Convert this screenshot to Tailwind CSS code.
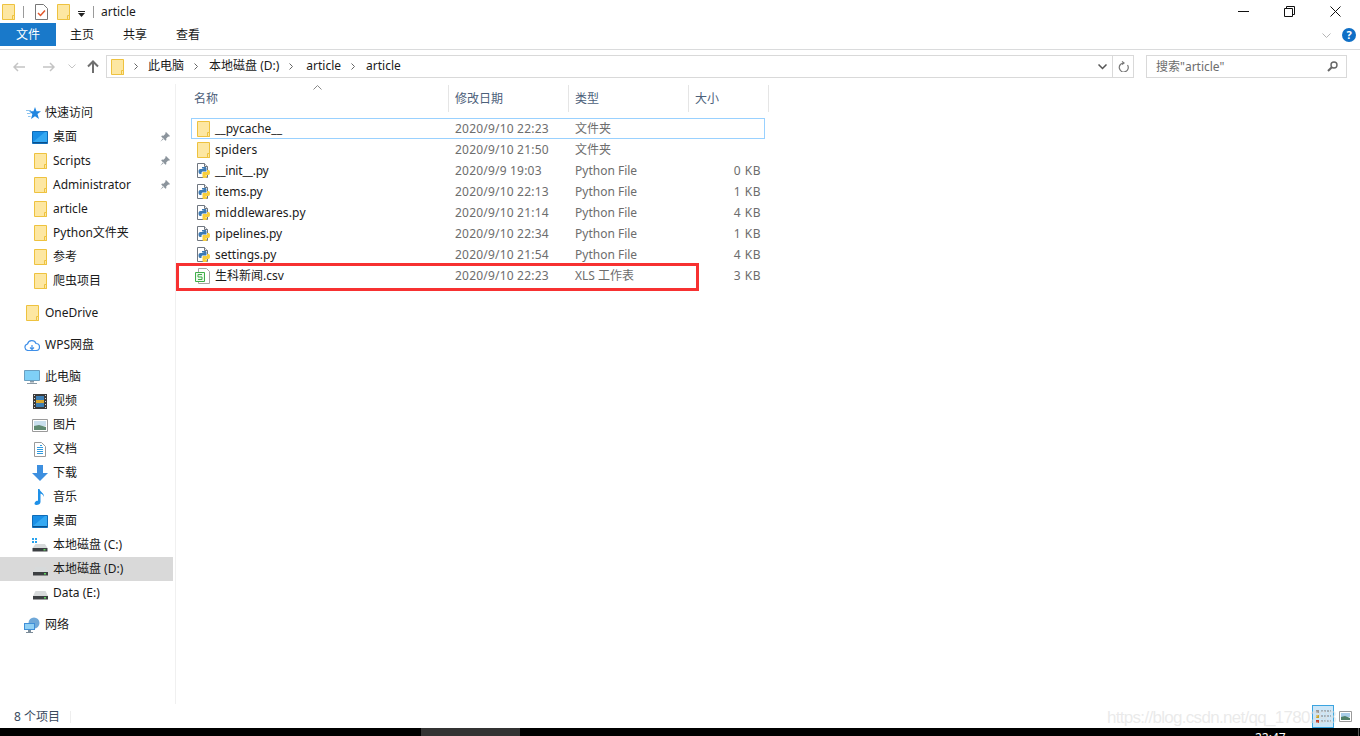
<!DOCTYPE html>
<html lang="zh-CN">
<head>
<meta charset="UTF-8">
<title>article</title>
<script src="https://cdn.jsdelivr.net/npm/@tailwindcss/browser@4"></script>
</head>
<body class="bg-white w-[1360px] h-[736px] overflow-hidden relative text-[12px] leading-[16px] text-[#1a1a1a] font-['Noto_Sans','Noto_Sans_CJK_SC',sans-serif]">

<svg class="hidden">
  <symbol id="folder" viewBox="0 0 13 16">
    <path d="M.5.5h12v15H.5z" fill="#fde7a2" stroke="#eec23f"/>
    <path d="M10.500 15.500v-4h2v4z" fill="#fde7a2" stroke="#eec23f"/>
  </symbol>
  <symbol id="desktop" viewBox="0 0 16 13">
    <path d="M.5.5h15v12H.5z" fill="#1a8fe6" stroke="#0f6cb8"/>
    <path d="M1 11l12-10h2v10z" fill="#35a9f2"/>
    <path d="M1 11h14v1H1z" fill="#0b4f8a"/>
  </symbol>
  <symbol id="py" viewBox="0 0 13 15">
    <path d="M.5.5h7l3 3v11H.5z" fill="#fff" stroke="#6f7680"/>
    <path d="M7.500.5v3h3" fill="#eee" stroke="#6f7680"/>
    <path d="M5 4h3c1 0 1.500.5 1.500 1.500V8.500H6C5 8.500 4.500 9 4.500 10v1H3c-1 0-1.500-1-1.500-2.500S2 6 3.500 6H6.500V5.500H5z" fill="#3d7ab3"/>
    <path d="M5.500 10c0-.8.500-1 1-1h3.500V7h1.500c1 0 1.500 1 1.500 2.500S12.500 12 11.500 12H8.500v.5H10V14c0 .7-.8 1-2.300 1-1.700 0-2.200-.5-2.200-1.500z" fill="#f9cf3c"/>
  </symbol>
  <symbol id="drive" viewBox="0 0 15 10">
    <path d="M2.500 1h10L15 6H0z" fill="#d7dadb"/>
    <path d="M0 6h15v3.500H0z" fill="#3c3f42"/>
    <path d="M11 7h2v1.500h-2z" fill="#5fd25f"/>
  </symbol>
  <symbol id="pin" viewBox="0 0 10 10">
    <path d="M6 0l4 4-1 .8-.8-.3L6.200 6.500 6.400 8 5.500 8.800 1.200 4.500 2 3.600l1.500.2 2-2-.3-.8zM3.200 6L.3 9.700 4 6.800z" fill="#8b949c"/>
  </symbol>
</svg>

<!-- title bar -->
<div class="h-[23px] flex items-center pl-[2px]">
  <svg class="w-[13px] h-[16px]"><use href="#folder"/></svg>
  <div class="w-px h-[12px] bg-[#9a9a9a] ml-[8px]"></div>
  <svg class="ml-[11px] w-[13px] h-[16px]" viewBox="0 0 13 16">
    <path d="M.5.5h8l4 4v11H.500z" fill="#fff" stroke="#777"/>
    <path d="M3 9l2.500 2.500L10 6.500" fill="none" stroke="#e2572b" stroke-width="1.500"/>
  </svg>
  <svg class="ml-[9px] w-[13px] h-[16px]"><use href="#folder"/></svg>
  <svg class="ml-[8px] mt-[4px] w-[7px] h-[6px]" viewBox="0 0 7 6"><path d="M0 0h7v1H0zM0 2h7L3.500 6z" fill="#222"/></svg>
  <div class="w-px h-[12px] bg-[#9a9a9a] ml-[8px]"></div>
  <span class="ml-[7px]">article</span>
  <div class="ml-auto flex items-center">
    <svg class="w-[11px] h-[11px]" viewBox="0 0 11 11"><path d="M0 5.500h11" stroke="#111"/></svg>
    <svg class="ml-[35px] w-[11px] h-[11px]" viewBox="0 0 11 11"><path d="M.5 2.500h8v8h-8zM2.500 2.500v-2h8v8h-2" fill="none" stroke="#111"/></svg>
    <svg class="ml-[35px] mr-[19px] w-[11px] h-[11px]" viewBox="0 0 11 11"><path d="M.5.500l10 10M10.500.500l-10 10" stroke="#111"/></svg>
  </div>
</div>

<!-- ribbon tabs -->
<div class="h-[27px] border-b border-[#dadbdc] flex items-start">
  <div class="w-[56px] h-[23px] bg-[#1979ca] text-white flex items-center justify-center">文件</div>
  <div class="w-[52px] h-[23px] flex items-center justify-center">主页</div>
  <div class="w-[54px] h-[23px] flex items-center justify-center">共享</div>
  <div class="w-[52px] h-[23px] flex items-center justify-center">查看</div>
  <div class="ml-auto mr-[4px] h-[24px] flex items-center">
    <svg class="w-[9px] h-[5px]" viewBox="0 0 9 5"><path d="M.5.500l4 4 4-4" fill="none" stroke="#b5b5b5"/></svg>
    <div class="ml-[11px] w-[14px] h-[14px] rounded-full bg-[#0f6fc6] text-white text-[11px] leading-[14px] font-bold text-center">?</div>
  </div>
</div>

<!-- address row -->
<div class="h-[34px] flex items-start pt-[5px]">
  <div class="w-[106px] h-[23px] flex items-center">
    <svg class="ml-[13px] w-[12px] h-[10px]" viewBox="0 0 12 10"><path d="M12 5H1M5 1L1 5l4 4" fill="none" stroke="#c4c4c4" stroke-width="1.500"/></svg>
    <svg class="ml-[18px] w-[12px] h-[10px]" viewBox="0 0 12 10"><path d="M0 5h11M7 1l4 4-4 4" fill="none" stroke="#c4c4c4" stroke-width="1.500"/></svg>
    <svg class="ml-[13px] w-[8px] h-[5px]" viewBox="0 0 8 5"><path d="M.5.500l3.500 3.500 3.500-3.500" fill="none" stroke="#c4c4c4"/></svg>
    <svg class="ml-[11px] w-[12px] h-[13px]" viewBox="0 0 12 13"><path d="M6 13V2M1 6.500L6 1.500l5 5" fill="none" stroke="#6f6f6f" stroke-width="2"/></svg>
  </div>
  <div class="w-[1028px] h-[23px] border border-[#d9d9d9] flex items-center">
    <svg class="ml-[4px] w-[13px] h-[16px]"><use href="#folder"/></svg>
    <svg class="ml-[10px] w-[4px] h-[7px]" viewBox="0 0 4 7"><path d="M.5.500l3 3-3 3" fill="none" stroke="#666"/></svg>
    <span class="ml-[10px] pb-[2px]">此电脑</span>
    <svg class="ml-[10px] w-[4px] h-[7px]" viewBox="0 0 4 7"><path d="M.5.500l3 3-3 3" fill="none" stroke="#666"/></svg>
    <span class="ml-[11px] pb-[2px]">本地磁盘 (D:)</span>
    <svg class="ml-[10px] w-[4px] h-[7px]" viewBox="0 0 4 7"><path d="M.5.500l3 3-3 3" fill="none" stroke="#666"/></svg>
    <span class="ml-[13px] pb-[2px]">article</span>
    <svg class="ml-[10px] w-[4px] h-[7px]" viewBox="0 0 4 7"><path d="M.5.500l3 3-3 3" fill="none" stroke="#666"/></svg>
    <span class="ml-[11px] pb-[2px]">article</span>
    <svg class="ml-auto mr-[5px] w-[9px] h-[6px]" viewBox="0 0 9 6"><path d="M.5.500l4 4 4-4" fill="none" stroke="#555" stroke-width="1.500"/></svg>
    <div class="w-[21px] h-full border-l border-[#d9d9d9] flex items-center justify-center pb-[2px]">
      <svg class="w-[11px] h-[12px]" viewBox="0 0 11 12"><path d="M4 1.500l2 1.500-2 1.500M6 3A4.500 4.500 0 1 0 9.500 5" fill="none" stroke="#777" stroke-width="1.200"/></svg>
    </div>
  </div>
  <div class="ml-[12px] w-[201px] h-[23px] border border-[#d9d9d9] flex items-center pl-[9px] pr-[8px] text-[#6d6d6d]">
    <span>搜索"article"</span>
    <svg class="ml-auto w-[11px] h-[11px]" viewBox="0 0 11 11"><circle cx="7" cy="4" r="3" fill="none" stroke="#666" stroke-width="1.400"/><path d="M4.800 6.200L1 10" stroke="#666" stroke-width="2"/></svg>
  </div>
</div>

<!-- main area -->
<div class="h-[620px] flex">
  <!-- nav pane -->
  <div class="w-[176px] pt-[17px] border-r border-[#f0f0f0] shrink-0">
    <div class="h-[24px] flex items-center pl-[26px]">
      <svg class="w-[15px] h-[13px]" viewBox="0 0 15 13"><path d="M9 0l1.500 4.200H15l-3.500 2.800L13 12 9 9.200 5 12l1.400-5L3 4.200h4.500z" fill="#2186e0"/><path d="M0 3h5v1H0zM1 6h3.500v1H1zM2 9h2.500v1H2z" fill="#8cc4ef"/></svg>
      <span class="ml-[4px]">快速访问</span>
    </div>
    <div class="h-[24px] flex items-center pl-[32px] pr-[5px]"><svg class="w-[16px] h-[13px]"><use href="#desktop"/></svg><span class="ml-[5px]">桌面</span><svg class="ml-auto w-[10px] h-[10px]"><use href="#pin"/></svg></div>
    <div class="h-[24px] flex items-center pl-[34px] pr-[5px]"><svg class="w-[13px] h-[16px]"><use href="#folder"/></svg><span class="ml-[6px]">Scripts</span><svg class="ml-auto w-[10px] h-[10px]"><use href="#pin"/></svg></div>
    <div class="h-[24px] flex items-center pl-[34px] pr-[5px]"><svg class="w-[13px] h-[16px]"><use href="#folder"/></svg><span class="ml-[6px]">Administrator</span><svg class="ml-auto w-[10px] h-[10px]"><use href="#pin"/></svg></div>
    <div class="h-[24px] flex items-center pl-[34px]"><svg class="w-[13px] h-[16px]"><use href="#folder"/></svg><span class="ml-[6px]">article</span></div>
    <div class="h-[24px] flex items-center pl-[34px]"><svg class="w-[13px] h-[16px]"><use href="#folder"/></svg><span class="ml-[6px]">Python文件夹</span></div>
    <div class="h-[24px] flex items-center pl-[34px]"><svg class="w-[13px] h-[16px]"><use href="#folder"/></svg><span class="ml-[6px]">参考</span></div>
    <div class="h-[24px] flex items-center pl-[34px]"><svg class="w-[13px] h-[16px]"><use href="#folder"/></svg><span class="ml-[6px]">爬虫项目</span></div>

    <div class="h-[24px] mt-[8px] flex items-center pl-[26px]"><svg class="w-[13px] h-[16px]"><use href="#folder"/></svg><span class="ml-[6px]">OneDrive</span></div>

    <div class="h-[24px] mt-[8px] flex items-center pl-[24px]">
      <svg class="w-[16px] h-[12px]" viewBox="0 0 16 12"><path d="M4 11.500a3.300 3.300 0 0 1-.5-6.500A4.500 4.500 0 0 1 12 4.500a3.500 3.500 0 0 1 0 7zM8 6v4M6 8.500l2 2 2-2" fill="none" stroke="#3f8fe8" stroke-width="1.200"/></svg>
      <span class="ml-[5px]">WPS网盘</span>
    </div>

    <div class="h-[24px] mt-[8px] flex items-center pl-[24px]">
      <svg class="w-[16px] h-[14px]" viewBox="0 0 16 14"><path d="M.5.500h15v10H.5z" fill="#7fd0f7" stroke="#6a9fc0"/><path d="M6 11h4v1.500H6zM3 13h10v1H3z" fill="#8a9aa6"/></svg>
      <span class="ml-[5px]">此电脑</span>
    </div>
    <div class="h-[24px] flex items-center pl-[33px]">
      <svg class="w-[14px] h-[15px]" viewBox="0 0 14 15"><path d="M0 0h14v15H0z" fill="#3b3b3b"/><path d="M3 2h8v11H3z" fill="#3d7fb5"/><path d="M3 6h8v3H3z" fill="#d9a72e"/><path d="M1 1h1v1H1zM1 4h1v1H1zM1 7h1v1H1zM1 10h1v1H1zM1 13h1v1H1zM12 1h1v1h-1zM12 4h1v1h-1zM12 7h1v1h-1zM12 10h1v1h-1zM12 13h1v1h-1z" fill="#ddd"/></svg>
      <span class="ml-[6px]">视频</span>
    </div>
    <div class="h-[24px] flex items-center pl-[32px]">
      <svg class="w-[16px] h-[13px]" viewBox="0 0 16 13"><path d="M.5.500h15v12H.5z" fill="#fff" stroke="#9a9a9a"/><path d="M2 2h12v5H2z" fill="#c9dfee"/><path d="M2 7l5-1 7 2v3H2z" fill="#5f8a72"/></svg>
      <span class="ml-[5px]">图片</span>
    </div>
    <div class="h-[24px] flex items-center pl-[34px]">
      <svg class="w-[12px] h-[15px]" viewBox="0 0 12 15"><path d="M.5.500h7l4 4v10H.5z" fill="#fff" stroke="#9a9a9a"/><path d="M6 3h2v1H6zM3 5h6v1H3zM3 7h6v1H3zM3 9h6v1H3zM3 11h6v1H3z" fill="#2f9ae0"/></svg>
      <span class="ml-[7px]">文档</span>
    </div>
    <div class="h-[24px] flex items-center pl-[32px]">
      <svg class="w-[16px] h-[16px]" viewBox="0 0 16 16"><path d="M5 0h6v8h5l-8 8-8-8h5z" fill="#3d8fdf"/></svg>
      <span class="ml-[5px]">下载</span>
    </div>
    <div class="h-[24px] flex items-center pl-[34px]">
      <svg class="w-[11px] h-[16px]" viewBox="0 0 11 16"><path d="M4 0h1.500c.5 3 5 4 4.500 8-.5-2-2-3-3.500-3.500V13c0 2-2 3-4 3S0 14.500 1 13.200 3 11.500 4 11.700z" fill="#1e90e8"/></svg>
      <span class="ml-[8px]">音乐</span>
    </div>
    <div class="h-[24px] flex items-center pl-[32px]"><svg class="w-[16px] h-[13px]"><use href="#desktop"/></svg><span class="ml-[5px]">桌面</span></div>
    <div class="h-[24px] flex items-center pl-[32px]">
      <svg class="w-[16px] h-[14px]" viewBox="0 0 16 14"><path d="M0 0h2v2H0zM3 0h2v2H3zM0 3h2v2H0zM3 3h2v2H3z" fill="#2aa3ee"/><path d="M3.500 6h9.500l2.500 4h-15z" fill="#d7dadb"/><path d="M.5 10h15v3.500H.5z" fill="#3c3f42"/><path d="M11.500 11h2v1.500h-2z" fill="#5fd25f"/></svg>
      <span class="ml-[5px]">本地磁盘 (C:)</span>
    </div>
    <div class="h-[24px] w-[173px] bg-[#d9d9d9] flex items-center pl-[33px]"><svg class="w-[15px] h-[10px] mt-[4px]"><use href="#drive"/></svg><span class="ml-[5px]">本地磁盘 (D:)</span></div>
    <div class="h-[24px] flex items-center pl-[33px]"><svg class="w-[15px] h-[10px] mt-[4px]"><use href="#drive"/></svg><span class="ml-[5px]">Data (E:)</span></div>

    <div class="h-[24px] mt-[8px] flex items-center pl-[24px]">
      <svg class="w-[16px] h-[16px]" viewBox="0 0 16 16"><circle cx="10" cy="6" r="5.500" fill="#6fa8d8"/><path d="M0 6h11v7H0z" fill="#3f8fd8"/><path d="M1 7h9v5H1z" fill="#8fd0f5"/><path d="M4 13h3v2H4zM2 15h7v1H2z" fill="#7c8c99"/></svg>
      <span class="ml-[5px]">网络</span>
    </div>
  </div>

  <!-- file list -->
  <div class="flex-1 relative">
    <svg class="absolute left-[137px] top-[1px] w-[9px] h-[5px]" viewBox="0 0 9 5"><path d="M.5 4.500l4-4 4 4" fill="none" stroke="#888"/></svg>
    <div class="h-[27px] mt-[1px] flex text-[#4c607a] pl-[12px]">
      <div class="w-[261px] pl-[6px] border-r border-[#e5e5e5] flex items-center">名称</div>
      <div class="w-[120px] pl-[6px] border-r border-[#e5e5e5] flex items-center">修改日期</div>
      <div class="w-[120px] pl-[6px] border-r border-[#e5e5e5] flex items-center">类型</div>
      <div class="w-[80px] pl-[6px] border-r border-[#e5e5e5] flex items-center">大小</div>
    </div>
    <div class="mt-[6px] ml-[15px] w-[574px] text-[#6d6d6d]">
      <div class="h-[21px] grid grid-cols-[258px_120px_120px_1fr] items-center outline outline-1 -outline-offset-1 outline-[#99d1ff]">
        <div class="flex items-center pl-[6px] text-[#1a1a1a]"><svg class="w-[13px] h-[16px]"><use href="#folder"/></svg><span class="ml-[5px]">__pycache__</span></div>
        <div class="pl-[6px] tracking-[0.2px]">2020/9/10 22:23</div><div class="pl-[6px]">文件夹</div><div></div>
      </div>
      <div class="h-[21px] grid grid-cols-[258px_120px_120px_1fr] items-center">
        <div class="flex items-center pl-[6px] text-[#1a1a1a]"><svg class="w-[13px] h-[16px]"><use href="#folder"/></svg><span class="ml-[5px] tracking-[0.2px]">spiders</span></div>
        <div class="pl-[6px] tracking-[0.2px]">2020/9/10 21:50</div><div class="pl-[6px]">文件夹</div><div></div>
      </div>
      <div class="h-[21px] grid grid-cols-[258px_120px_120px_1fr] items-center">
        <div class="flex items-center pl-[6px] text-[#1a1a1a]"><svg class="w-[13px] h-[15px]"><use href="#py"/></svg><span class="ml-[5px] tracking-[-0.2px]">__init__.py</span></div>
        <div class="pl-[6px] tracking-[0.2px]">2020/9/9 19:03</div><div class="pl-[6px]">Python File</div><div class="text-right pr-[4px] tracking-[0.5px]">0 KB</div>
      </div>
      <div class="h-[21px] grid grid-cols-[258px_120px_120px_1fr] items-center">
        <div class="flex items-center pl-[6px] text-[#1a1a1a]"><svg class="w-[13px] h-[15px]"><use href="#py"/></svg><span class="ml-[5px]">items.py</span></div>
        <div class="pl-[6px] tracking-[0.2px]">2020/9/10 22:13</div><div class="pl-[6px]">Python File</div><div class="text-right pr-[4px] tracking-[0.5px]">1 KB</div>
      </div>
      <div class="h-[21px] grid grid-cols-[258px_120px_120px_1fr] items-center">
        <div class="flex items-center pl-[6px] text-[#1a1a1a]"><svg class="w-[13px] h-[15px]"><use href="#py"/></svg><span class="ml-[5px] tracking-[0.15px]">middlewares.py</span></div>
        <div class="pl-[6px] tracking-[0.2px]">2020/9/10 21:14</div><div class="pl-[6px]">Python File</div><div class="text-right pr-[4px] tracking-[0.5px]">4 KB</div>
      </div>
      <div class="h-[21px] grid grid-cols-[258px_120px_120px_1fr] items-center">
        <div class="flex items-center pl-[6px] text-[#1a1a1a]"><svg class="w-[13px] h-[15px]"><use href="#py"/></svg><span class="ml-[5px]">pipelines.py</span></div>
        <div class="pl-[6px] tracking-[0.2px]">2020/9/10 22:34</div><div class="pl-[6px]">Python File</div><div class="text-right pr-[4px] tracking-[0.5px]">1 KB</div>
      </div>
      <div class="h-[21px] grid grid-cols-[258px_120px_120px_1fr] items-center">
        <div class="flex items-center pl-[6px] text-[#1a1a1a]"><svg class="w-[13px] h-[15px]"><use href="#py"/></svg><span class="ml-[5px]">settings.py</span></div>
        <div class="pl-[6px] tracking-[0.2px]">2020/9/10 21:54</div><div class="pl-[6px]">Python File</div><div class="text-right pr-[4px] tracking-[0.5px]">4 KB</div>
      </div>
      <div class="h-[21px] grid grid-cols-[258px_120px_120px_1fr] items-center">
        <div class="flex items-center pl-[4px] text-[#1a1a1a]">
          <svg class="w-[15px] h-[16px]" viewBox="0 0 15 16"><path d="M3.500.5h8l3 3v12h-11z" fill="#fff" stroke="#a5a5a5"/><path d="M.5 4.500h9v9h-9z" fill="#eef8ee" stroke="#3fae49"/><path d="M7 6.500H3v2.500h4v2.500H3" fill="none" stroke="#3fae49"/></svg>
          <span class="ml-[5px]">生科新闻.csv</span>
        </div>
        <div class="pl-[6px] tracking-[0.2px]">2020/9/10 22:23</div><div class="pl-[6px]">XLS 工作表</div><div class="text-right pr-[4px] tracking-[0.5px]">3 KB</div>
      </div>
    </div>
    <!-- red annotation -->
    <div class="absolute left-0 top-[179px] w-[523px] h-[28px] border-[3px] border-[#f73131]"></div>
  </div>
</div>

<!-- status bar -->
<div class="h-[24px] flex items-center pl-[14px] text-[#3a4a5e] pt-[1px]">
  <span>8 个项目</span>
  <div class="w-px h-[12px] bg-[#eeeeee] ml-[10px]"></div>
  <div class="ml-auto mr-[8px] flex items-center">
    <div class="w-[22px] h-[23px] border border-[#3ba4e0] bg-[#cde6f7] flex items-center justify-center">
      <svg class="w-[15px] h-[13px]" viewBox="0 0 15 13"><path d="M0 0h3v3H0z" fill="#999"/><path d="M0 5h3v3H0z" fill="#c9a227"/><path d="M0 10h3v3H0z" fill="#c0392b"/><path d="M5 1h10M5 6h10M5 11h10" stroke="#777" stroke-dasharray="2 1"/></svg>
    </div>
    <svg class="ml-[5px] w-[13px] h-[11px]" viewBox="0 0 13 11"><path d="M.5.5h12v10H.5z" fill="#fff" stroke="#9a9a9a"/><path d="M2 2h9v4H2z" fill="#a9cde8"/><path d="M2 6l4-1 5 2v2H2z" fill="#4f7f68"/></svg>
  </div>
</div>

<!-- taskbar strip -->
<div class="h-[8px] bg-black relative overflow-hidden">
  <div class="absolute left-[421px] top-0 w-[99px] h-[8px] bg-[#333333]"></div>
  <div class="absolute left-[1255px] top-[2px] text-white text-[12px] leading-[16px]">22:47</div>
  <div class="absolute right-[1px] top-0 w-px h-[8px] bg-[#555555]"></div>
</div>

<!-- watermark -->
<div class="absolute left-[1107px] top-[706px] text-[#dcdcdc]/60 text-[17px] leading-[24px] tracking-[-0.7px] font-['Liberation_Sans',sans-serif]">https://blog.csdn.net/qq_1780293</div>
</body>
</html>
